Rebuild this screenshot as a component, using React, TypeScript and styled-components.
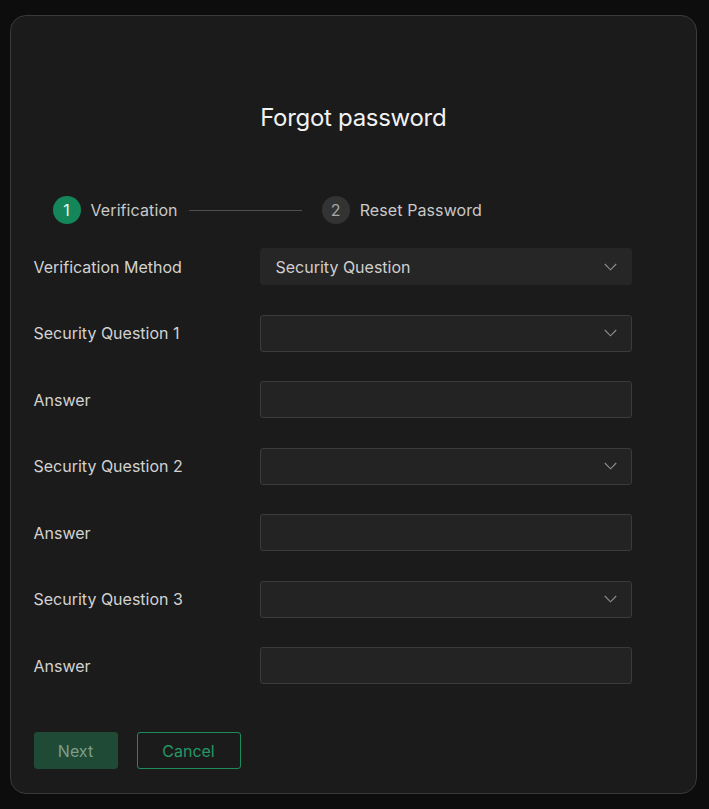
import styled, { createGlobalStyle } from 'styled-components';

const GlobalStyle = createGlobalStyle`
    html, body {
        margin: 0;
        padding: 0;
        background: #0d0d0d;
    }
    body {
        font-family: 'Inter', 'Noto Sans', sans-serif;
    }
`;

const Page = styled.div`
    padding: 15px 12px 15px 10px;
`;

const Dialog = styled.div`
    box-sizing: border-box;
    width: 687px;
    height: 779px;
    background: #1b1b1b;
    border: 1.5px solid #3a3a3a;
    border-radius: 16px;
    padding: 86px 23px 24px 22.5px;
    display: flex;
    flex-direction: column;
`;

const Title = styled.h2`
    margin: 0;
    text-align: center;
    font-size: 24px;
    line-height: 32px;
    font-weight: 400;
    color: #f2f2f2;
    letter-spacing: -0.3px;
`;

const Steps = styled.div`
    display: flex;
    align-items: center;
    margin: 62px 0 24px 19px;
    height: 28px;
`;

const Step = styled.div`
    display: flex;
    align-items: center;
    gap: 10px;
`;

const StepCircle = styled.span<{ $active?: boolean }>`
    width: 28px;
    height: 28px;
    border-radius: 50%;
    display: flex;
    align-items: center;
    justify-content: center;
    font-size: 16px;
    background: ${(p) => (p.$active ? '#15865a' : '#333333')};
    color: ${(p) => (p.$active ? '#e8f5ee' : '#a8a8a8')};
`;

const StepLabel = styled.span`
    font-size: 16px;
    color: #c9c9c9;
    letter-spacing: 0.1px;
`;

const StepLine = styled.div`
    width: 113px;
    height: 1px;
    background: #505050;
    margin: 0 20px 0 11px;
`;

const Form = styled.div`
    display: flex;
    flex-direction: column;
    gap: 29.5px;
`;

const Row = styled.div`
    display: flex;
    align-items: center;
`;

const Label = styled.label`
    width: 226px;
    font-size: 16px;
    color: #d2d2d2;
`;

const Field = styled.div<{ $filled?: boolean }>`
    box-sizing: border-box;
    width: 372px;
    height: 37px;
    border-radius: 3px;
    background: ${(p) => (p.$filled ? '#262626' : '#232323')};
    border: 1px solid ${(p) => (p.$filled ? '#262626' : '#3b3b3b')};
    display: flex;
    align-items: center;
    justify-content: space-between;
    padding: 0 14px 0 15px;
    font-size: 16px;
    color: #cfcfcf;
`;

const Actions = styled.div`
    display: flex;
    gap: 19px;
    margin-top: 48px;
`;

const Button = styled.button<{ $variant: 'primary' | 'outline' }>`
    box-sizing: border-box;
    height: 37px;
    width: ${(p) => (p.$variant === 'primary' ? '84px' : '104px')};
    padding: 0;
    border-radius: 3px;
    font-family: 'Inter', 'Noto Sans', sans-serif;
    font-size: 16px;
    cursor: pointer;
    background: ${(p) => (p.$variant === 'primary' ? '#1f4a36' : 'transparent')};
    color: ${(p) => (p.$variant === 'primary' ? '#7e9c8b' : '#259766')};
    border: 1px solid ${(p) => (p.$variant === 'primary' ? '#1f4a36' : '#1f8a5e')};
`;

function Chevron() {
    return (
        <svg width="13" height="8" viewBox="0 0 13 8" fill="none">
            <path d="M0.8 1L6.5 6.8L12.2 1" stroke="#8e8e8e" strokeWidth="1.1" />
        </svg>
    );
}

const rows: { label: string; select: boolean; value?: string }[] = [
    { label: 'Verification Method', select: true, value: 'Security Question' },
    { label: 'Security Question 1', select: true },
    { label: 'Answer', select: false },
    { label: 'Security Question 2', select: true },
    { label: 'Answer', select: false },
    { label: 'Security Question 3', select: true },
    { label: 'Answer', select: false },
];

function App() {
    return (
        <Page>
            <GlobalStyle />
            <Dialog>
                <Title>Forgot password</Title>
                <Steps>
                    <Step>
                        <StepCircle $active>1</StepCircle>
                        <StepLabel>Verification</StepLabel>
                    </Step>
                    <StepLine />
                    <Step>
                        <StepCircle>2</StepCircle>
                        <StepLabel>Reset Password</StepLabel>
                    </Step>
                </Steps>
                <Form>
                    {rows.map((row, i) => (
                        <Row key={i}>
                            <Label>{row.label}</Label>
                            <Field $filled={!!row.value}>
                                <span>{row.value}</span>
                                {row.select && <Chevron />}
                            </Field>
                        </Row>
                    ))}
                </Form>
                <Actions>
                    <Button $variant="primary">Next</Button>
                    <Button $variant="outline">Cancel</Button>
                </Actions>
            </Dialog>
        </Page>
    );
}

export default App;
